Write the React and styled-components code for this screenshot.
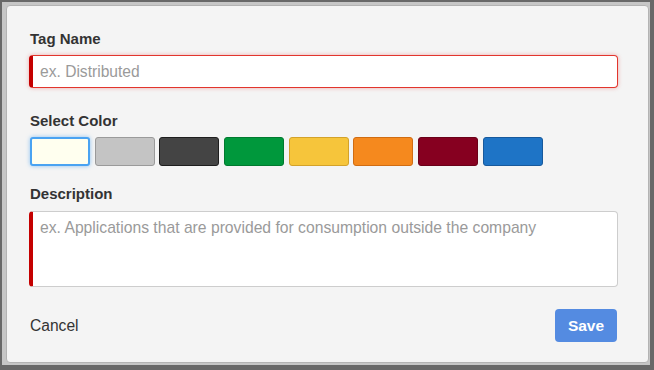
import React from 'react';
import styled, { createGlobalStyle } from 'styled-components';

const GlobalStyle = createGlobalStyle`
	html, body {
		margin: 0;
		padding: 0;
		background: #686868;
	}
	* {
		box-sizing: border-box;
	}
`;

const SWATCHES = [
	{ fill: '#ffffef', edge: '#4aa3f2', selected: true },
	{ fill: '#c4c4c4', edge: '#9a9a9a' },
	{ fill: '#444444', edge: '#1e1e1e' },
	{ fill: '#00983c', edge: '#007a2f' },
	{ fill: '#f6c53b', edge: '#d3a22a' },
	{ fill: '#f5891e', edge: '#d06c12' },
	{ fill: '#860020', edge: '#6a0018' },
	{ fill: '#1e74c6', edge: '#17599c' },
];

const Page = styled.div`
	width: 654px;
	height: 370px;
	padding: 2px 4px 5px 2px;
	font-family: 'Liberation Sans', Arial, sans-serif;
`;

const Frame = styled.div`
	height: 100%;
	background: #c6c6c6;
	padding: 3px 1px 2px 4px;
`;

const Panel = styled.form`
	height: 100%;
	background: #f4f4f4;
	border: 1px solid #b3b3b3;
	border-radius: 4px;
	padding: 23px 30px 20px 22px;
	display: flex;
	flex-direction: column;
`;

const Label = styled.label`
	display: block;
	font-size: 15px;
	line-height: 20px;
	font-weight: bold;
	color: #333;
	margin: ${(p) => p.$top || 0}px 0 ${(p) => p.$bottom || 6}px 1px;
`;

const TextInput = styled.input`
	display: block;
	width: 100%;
	height: 33px;
	padding: 0 8px 0 7px;
	font-family: inherit;
	font-size: 15.6px;
	color: #333;
	background: #fff;
	border: 1px solid #e2352d;
	border-left: 4px solid #c40000;
	border-radius: 4px;
	box-shadow: 0 0 4px rgba(226, 40, 40, 0.35);
	outline: none;
	&::placeholder {
		color: #9a9a9a;
	}
`;

const SwatchRow = styled.div`
	display: flex;
	gap: 4.7px;
	padding-left: 1px;
`;

const Swatch = styled.button`
	width: 60px;
	height: 29px;
	padding: 0;
	border-radius: 3px;
	background: ${(p) => p.$fill};
	border: ${(p) => (p.$selected ? 2 : 1)}px solid ${(p) => p.$edge};
	box-shadow: ${(p) => (p.$selected ? '0 0 4px rgba(74, 163, 242, 0.6)' : 'none')};
	cursor: pointer;
`;

const TextArea = styled.textarea`
	display: block;
	width: 100%;
	height: 76px;
	padding: 6px 8px 0 7px;
	font-family: inherit;
	font-size: 15.7px;
	line-height: 20px;
	color: #333;
	background: #fff;
	border: 1px solid #cdcdcd;
	border-left: 4px solid #c40000;
	border-radius: 4px;
	resize: none;
	outline: none;
	&::placeholder {
		color: #9a9a9a;
	}
`;

const Footer = styled.div`
	display: flex;
	justify-content: space-between;
	align-items: center;
	margin-top: 22px;
	padding-left: 1px;
`;

const CancelLink = styled.a`
	font-size: 15.6px;
	color: #333;
	text-decoration: none;
	cursor: pointer;
`;

const SaveButton = styled.button`
	width: 62px;
	height: 33px;
	margin-right: 1px;
	border: none;
	border-radius: 4px;
	background: #548be1;
	color: #fff;
	font-family: inherit;
	font-size: 15.5px;
	font-weight: bold;
	cursor: pointer;
`;

export default function App() {
	return (
		<>
			<GlobalStyle />
			<Page>
				<Frame>
					<Panel onSubmit={(e) => e.preventDefault()}>
						<Label htmlFor="tag-name">Tag Name</Label>
						<TextInput id="tag-name" placeholder="ex. Distributed" autoFocus />

						<Label $top={23}>Select Color</Label>
						<SwatchRow>
							{SWATCHES.map((s) => (
								<Swatch
									key={s.fill}
									type="button"
									$fill={s.fill}
									$edge={s.edge}
									$selected={s.selected}
								/>
							))}
						</SwatchRow>

						<Label htmlFor="tag-desc" $top={18} $bottom={7}>
							Description
						</Label>
						<TextArea
							id="tag-desc"
							placeholder="ex. Applications that are provided for consumption outside the company"
						/>

						<Footer>
							<CancelLink>Cancel</CancelLink>
							<SaveButton type="submit">Save</SaveButton>
						</Footer>
					</Panel>
				</Frame>
			</Page>
		</>
	);
}
